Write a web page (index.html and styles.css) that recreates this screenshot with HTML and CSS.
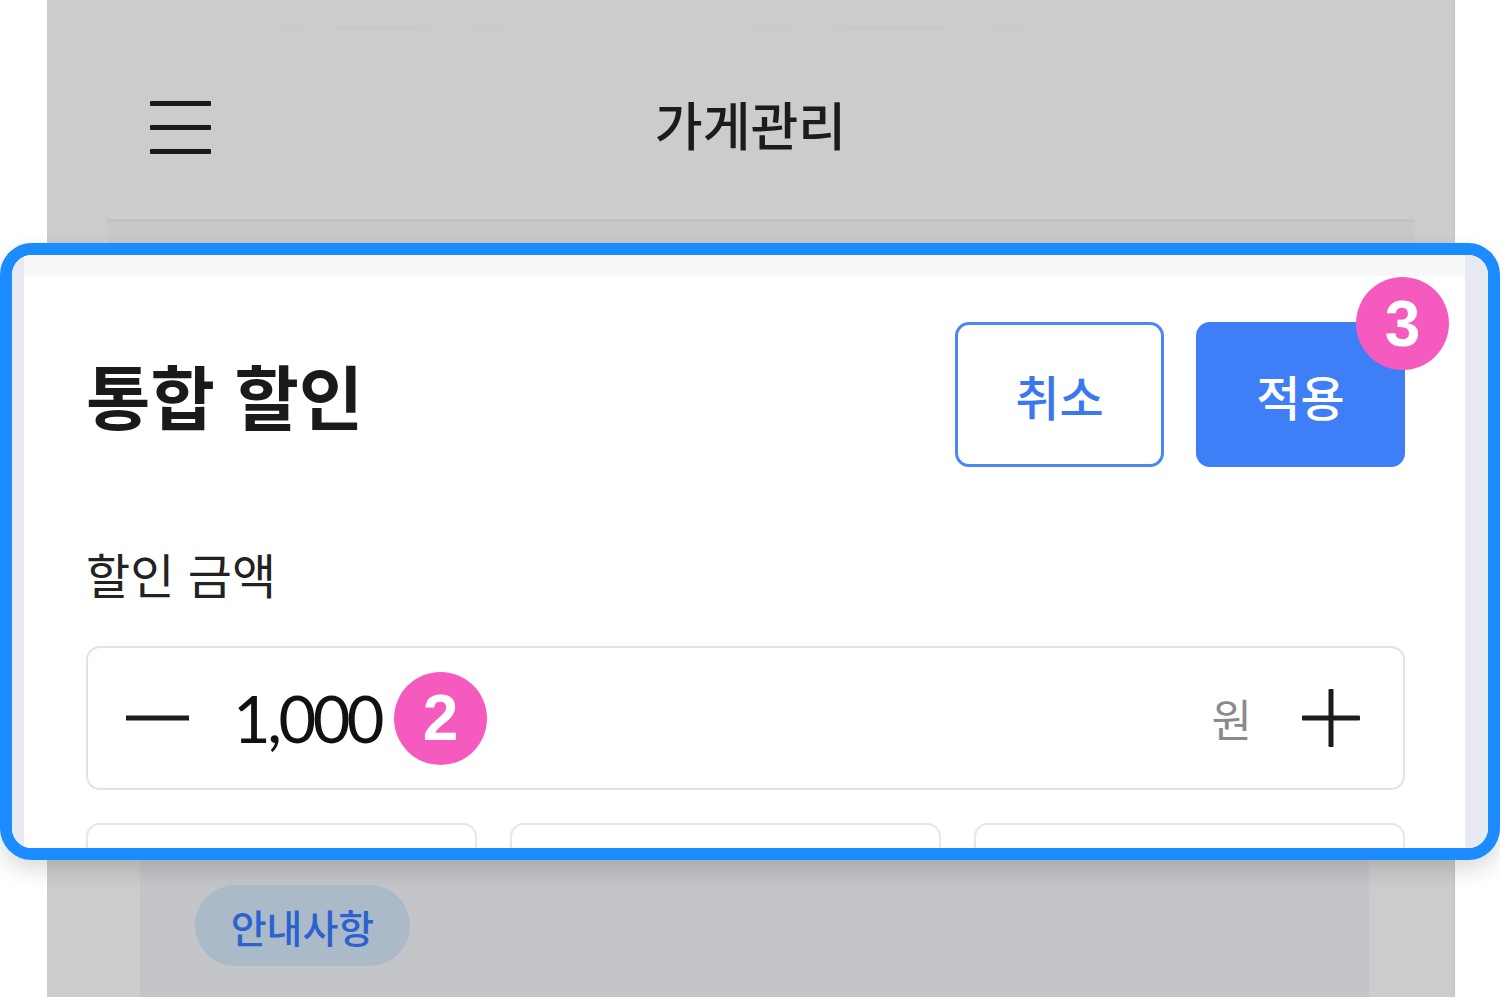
FILE: index.html
```html
<!DOCTYPE html>
<html lang="ko">
<head>
<meta charset="utf-8">
<title>통합 할인</title>
<link rel="stylesheet" href="styles.css">
</head>
<body>
<div class="phone">
  <div class="faint-top"></div>
  <header class="header">
    <div class="hamburger"><span></span><span></span><span></span></div>
    <h1 class="header-title">가게관리</h1>
    <div></div>
  </header>
  <div class="divider"></div>
  <div class="sub-strip"></div>

  <section class="callout">
    <div class="edge edge-left"></div>
    <div class="sheet">
      <div class="sheet-top"></div>
      <div class="sheet-body">
        <div class="title-row">
          <h2 class="sheet-title">통합 할인</h2>
          <div class="actions">
            <button class="btn btn-outline">취소</button>
            <div class="btn-wrap">
              <button class="btn btn-fill">적용</button>
              <span class="badge badge-3">3</span>
            </div>
          </div>
        </div>
        <div class="field-label">할인 금액</div>
        <div class="amount-input">
          <svg class="icon-minus" width="63" height="6" viewBox="0 0 63 6"><rect x="0" y="0.5" width="63" height="5" fill="#1c1c1c"/></svg>
          <span class="amount">1,000</span>
          <span class="badge badge-2">2</span>
          <span class="unit">원</span>
          <svg class="icon-plus" width="58" height="58" viewBox="0 0 58 58"><rect x="26.5" y="0" width="5" height="58" rx="1" fill="#1c1c1c"/><rect x="0" y="26.5" width="58" height="5" rx="1" fill="#1c1c1c"/></svg>
        </div>
        <div class="preset-row">
          <div class="preset"></div>
          <div class="preset"></div>
          <div class="preset"></div>
        </div>
      </div>
    </div>
    <div class="edge edge-right"></div>
  </section>

  <div class="under">
    <span class="pill">안내사항</span>
  </div>
</div>
</body>
</html>
```

FILE: styles.css
```css
html, body {
  margin: 0;
  padding: 0;
  background: #ffffff;
  overflow: hidden;
  font-family: "Noto Sans CJK KR", "Noto Sans", sans-serif;
}

.phone {
  margin-left: 47px;
  width: 1408px;
  height: 997px;
  padding-top: 27px;
  background: #cccccc;
  border-right: 1px solid #c3c3c3;
  box-sizing: border-box;
}

.faint-top {
  height: 2px;
  margin: 0 39px 0 60px;
  background: linear-gradient(90deg, #cccccc, #c9c9c9 20%, #cbcbcb 40%, #c9c9c9 60%, #cbcbcb 80%, #cccccc);
}

.header {
  height: 190px;
  display: grid;
  grid-template-columns: 1fr auto 1fr;
  align-items: center;
}

.hamburger {
  width: 61px;
  margin-left: 103px;
  display: flex;
  flex-direction: column;
  gap: 19px;
  margin-top: 6px;
}
.hamburger span {
  display: block;
  height: 5px;
  background: #1a1a1a;
  border-radius: 1px;
}

.header-title {
  margin: 0;
  font-size: 52px;
  font-weight: 500;
  color: #1c1c1c;
  line-height: 1;
}

.divider {
  height: 3px;
  margin: 0 39px 0 60px;
  background: #c2c2c2;
}

.sub-strip {
  height: 21px;
  margin: 0 39px 0 60px;
  background: #c8c8c8;
}

.callout {
  position: relative;
  z-index: 1;
  margin-left: -47px;
  width: 1500px;
  height: 617px;
  box-sizing: border-box;
  border: 12px solid #1a8cff;
  border-radius: 32px;
  overflow: hidden;
  display: flex;
  background: #ffffff;
  box-shadow: 0 10px 22px rgba(0, 0, 0, 0.14);
}

.edge {
  background: #e7eaf2;
  flex: none;
}
.edge-left { width: 12px; }
.edge-right { width: 23px; }

.sheet {
  flex: 1;
  display: flex;
  flex-direction: column;
  background: #ffffff;
  min-width: 0;
}

.sheet-top {
  flex: none;
  height: 21px;
  background: #f8f8f9;
}

.sheet-body {
  flex: none;
  padding: 46px 60px 0 62px;
}

.title-row {
  display: flex;
  justify-content: space-between;
  align-items: center;
  height: 145px;
}

.sheet-title {
  margin: 0;
  font-size: 70px;
  font-weight: 700;
  color: #1a1a1a;
  line-height: 1;
}

.actions {
  display: flex;
  gap: 32px;
  height: 145px;
}

.btn-wrap {
  position: relative;
}

.btn {
  width: 209px;
  height: 145px;
  box-sizing: border-box;
  border-radius: 14px;
  font-family: "Noto Sans CJK KR", sans-serif;
  font-size: 48px;
  font-weight: 500;
  cursor: pointer;
  padding: 0;
}
.btn-outline {
  background: #ffffff;
  border: 3px solid #4a86f5;
  color: #3a78ee;
}
.btn-fill {
  background: #3e7ef7;
  border: none;
  color: #ffffff;
}

.badge {
  display: inline-flex;
  align-items: center;
  justify-content: center;
  width: 93px;
  height: 93px;
  border-radius: 50%;
  background: #f55bbf;
  color: #ffffff;
  font-family: "Liberation Sans", Arial, sans-serif;
  font-weight: 700;
  font-size: 64px;
  line-height: 1;
}

.badge-3 {
  position: absolute;
  top: -45px;
  right: -44px;
}

.field-label {
  margin-top: 77px;
  font-size: 48px;
  line-height: 58px;
  color: #222222;
}

.amount-input {
  margin-top: 44px;
  height: 144px;
  box-sizing: border-box;
  border: 2px solid #e3e3e3;
  border-radius: 14px;
  display: flex;
  align-items: center;
  padding: 0 43px 0 38px;
}

.icon-minus {
  flex: none;
}

.amount {
  margin-left: 44px;
  font-family: Lato, "Noto Sans", sans-serif;
  font-size: 65px;
  font-weight: 400;
  letter-spacing: -3.5px;
  color: #111111;
  line-height: 1;
}

.badge-2 {
  margin-left: 13px;
}

.unit {
  margin-left: auto;
  font-size: 44px;
  color: #8a8a8a;
  line-height: 1;
}

.icon-plus {
  margin-left: 50px;
  flex: none;
}

.preset-row {
  margin-top: 33px;
  display: grid;
  grid-template-columns: 391px 1fr 1fr;
  gap: 33px;
}

.preset {
  height: 140px;
  box-sizing: border-box;
  border: 2px solid #e6e6e6;
  border-radius: 14px;
}

.under {
  margin: 0 85px 0 93px;
  height: 137px;
  background: #c4c5c8;
  padding: 25px 55px 0;
  box-sizing: border-box;
}

.pill {
  display: inline-flex;
  align-items: center;
  justify-content: center;
  width: 215px;
  height: 81px;
  border-radius: 41px;
  background: #abbac9;
  color: #2b62cf;
  font-size: 39px;
  font-weight: 500;
}
```
